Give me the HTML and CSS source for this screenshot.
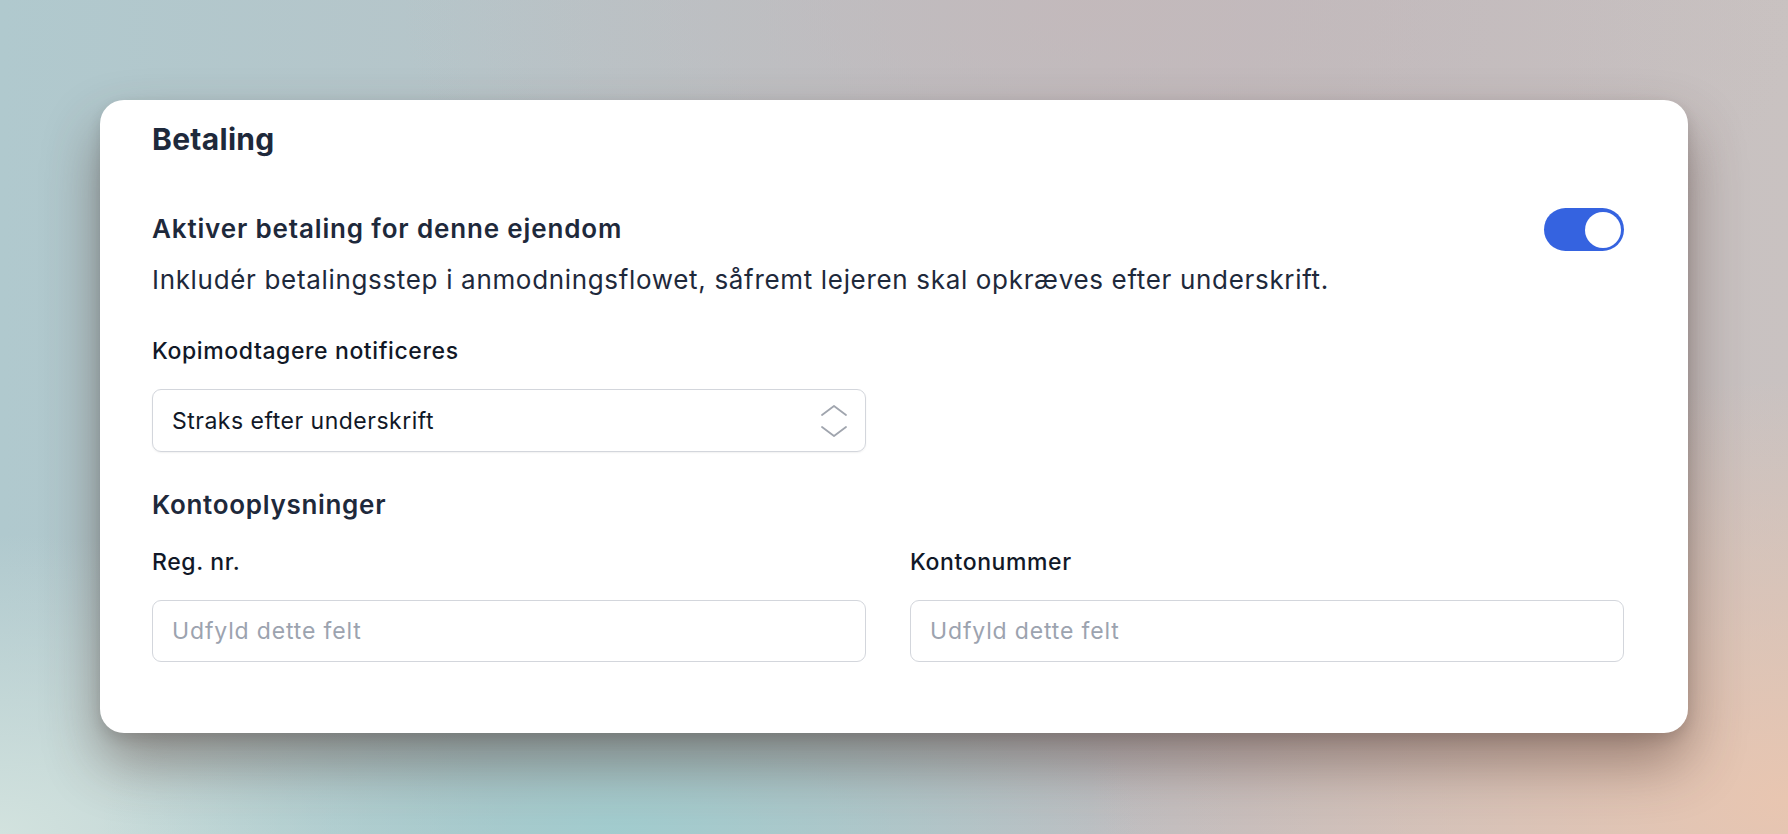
FILE: index.html
```html
<!DOCTYPE html>
<html lang="da">
<head>
<meta charset="utf-8">
<title>Betaling</title>
<link rel="stylesheet" href="styles.css">
</head>
<body>
<div class="stage">
  <section class="card">
    <h2 class="title">Betaling</h2>
    <div class="toggle-row">
      <h3 class="subtitle">Aktiver betaling for denne ejendom</h3>
      <span class="switch" role="switch" aria-checked="true"><span class="knob"></span></span>
    </div>
    <p class="desc">Inkludér betalingsstep i anmodningsflowet, såfremt lejeren skal opkræves efter underskrift.</p>

    <label class="label label-first">Kopimodtagere notificeres</label>
    <div class="select">
      <span class="select-value">Straks efter underskrift</span>
      <svg class="chev" width="28" height="36" viewBox="0 0 28 36" aria-hidden="true">
        <path d="M2 12 L14 3 L26 12" fill="none" stroke="#a0a5ae" stroke-width="1.8" stroke-linecap="round" stroke-linejoin="round"/>
        <path d="M2 24 L14 33 L26 24" fill="none" stroke="#a0a5ae" stroke-width="1.8" stroke-linecap="round" stroke-linejoin="round"/>
      </svg>
    </div>

    <h3 class="subtitle section">Kontooplysninger</h3>
    <div class="grid">
      <div class="field">
        <label class="label">Reg. nr.</label>
        <div class="input"><span class="placeholder">Udfyld dette felt</span></div>
      </div>
      <div class="field">
        <label class="label">Kontonummer</label>
        <div class="input"><span class="placeholder">Udfyld dette felt</span></div>
      </div>
    </div>
  </section>
</div>
</body>
</html>
```

FILE: styles.css
```css
* { box-sizing: border-box; }
html, body { margin: 0; padding: 0; }
body {
  width: 1788px;
  height: 834px;
  overflow: hidden;
  font-family: Inter, "Noto Sans", "Liberation Sans", sans-serif;
  background:
    radial-gradient(ellipse 700px 420px at 1788px 800px, rgba(234,198,176,0.95), rgba(234,198,176,0) 100%),
    radial-gradient(ellipse 520px 260px at 620px 834px, rgba(160,204,206,0.95), rgba(160,204,206,0) 100%),
    radial-gradient(ellipse 500px 300px at 0px 834px, rgba(210,226,222,1), rgba(210,226,222,0) 100%),
    radial-gradient(ellipse 700px 400px at 1100px 0px, rgba(196,184,186,0.8), rgba(196,184,186,0) 100%),
    linear-gradient(90deg, #b0c9ce 0%, #b9c3c7 40%, #c0bcbf 70%, #c9c2c1 100%);
}
.stage {
  padding: 100px 100px 0 100px;
}
.card {
  width: 1588px;
  height: 633px;
  background: #ffffff;
  border-radius: 24px;
  padding: 20px 64px 0 52px;
  box-shadow: 0 30px 56px rgba(70, 44, 38, 0.45), 0 6px 14px rgba(0, 0, 0, 0.12);
  color: #1e293b;
}
.title {
  margin: 0;
  font-size: 30px;
  line-height: 38px;
  letter-spacing: 0.3px;
  font-weight: 700;
  color: #1e293b;
}
.toggle-row {
  margin-top: 48px;
  display: flex;
  align-items: center;
  justify-content: space-between;
}
.subtitle {
  margin: 0;
  font-size: 26px;
  line-height: 35px;
  letter-spacing: 0.85px;
  font-weight: 600;
  color: #1e293b;
}
.switch {
  width: 80px;
  height: 43px;
  border-radius: 22px;
  background: #3563e0;
  padding: 3.5px;
  display: flex;
  justify-content: flex-end;
  margin-top: 2px;
}
.knob {
  width: 36px;
  height: 36px;
  border-radius: 50%;
  background: #ffffff;
}
.desc {
  margin: 11px 0 0 0;
  font-size: 26px;
  line-height: 35px;
  letter-spacing: 0.67px;
  font-weight: 400;
  color: #1e293b;
}
.label {
  display: block;
  font-size: 23px;
  line-height: 30px;
  letter-spacing: 0.6px;
  font-weight: 500;
  color: #111827;
}
.label-first {
  margin-top: 39px;
}
.select {
  margin-top: 23px;
  width: 714px;
  height: 63px;
  border: 1.5px solid #d3d6dc;
  border-radius: 9px;
  box-shadow: 0 1px 2px rgba(0,0,0,0.06);
  display: flex;
  align-items: center;
  justify-content: space-between;
  padding: 0 17px 0 19px;
}
.select-value {
  font-size: 23px;
  letter-spacing: 0.5px;
  color: #111827;
}
.chev { display: block; }
.section {
  margin-top: 35px;
  letter-spacing: 0.7px;
}
.grid {
  margin-top: 25px;
  display: grid;
  grid-template-columns: 714px 714px;
  column-gap: 44px;
}
.field .input {
  margin-top: 23px;
  height: 62px;
  border: 1.5px solid #d3d6dc;
  border-radius: 9px;
  display: flex;
  align-items: center;
  padding: 0 19px;
}
.placeholder {
  font-size: 23px;
  letter-spacing: 0.85px;
  color: #9ca3af;
}
```
